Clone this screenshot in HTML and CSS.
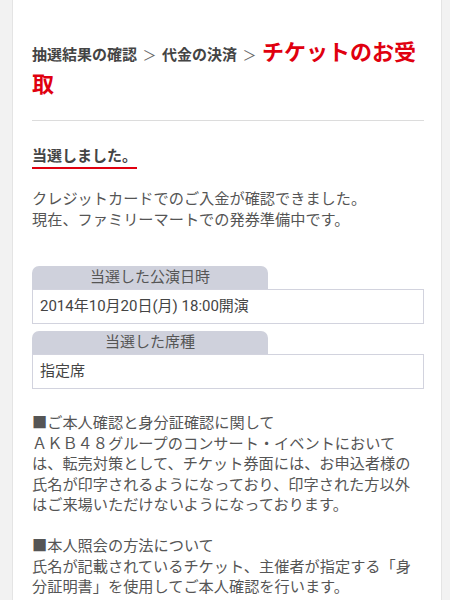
FILE: index.html
```html
<!DOCTYPE html>
<html lang="ja">
<head>
<meta charset="utf-8">
<link rel="stylesheet" href="styles.css">
</head>
<body>
<div class="page">
  <div class="card">
    <h1 class="crumbs"><span class="step">抽選結果の確認</span><span class="sep">＞</span><span class="step">代金の決済</span><span class="sep">＞</span><span class="current">チケットのお受取</span></h1>
    <hr class="divider">
    <h2 class="result"><span class="result-text">当選しました。</span></h2>
    <p class="lead">クレジットカードでのご入金が確認できました。<br>現在、ファミリーマートでの発券準備中です。</p>

    <div class="field">
      <div class="tab">当選した公演日時</div>
      <div class="box">2014年10月20日(月) 18:00開演</div>
    </div>
    <div class="field">
      <div class="tab">当選した席種</div>
      <div class="box">指定席</div>
    </div>

    <p class="notes">■ご本人確認と身分証確認に関して<br>ＡＫＢ４８グループのコンサート・イベントにおいては、転売対策として、チケット券面には、お申込者様の氏名が印字されるようになっており、印字された方以外はご来場いただけないようになっております。</p>
    <p class="notes">■本人照会の方法について<br>氏名が記載されているチケット、主催者が指定する「身分証明書」を使用してご本人確認を行います。<br>身分証明書は、「写真付きの公的証明書」を原則とさせていただきます。</p>
  </div>
</div>
</body>
</html>
```

FILE: styles.css
```css
html, body {
  margin: 0;
  padding: 0;
  background: #f2f2f2;
}
body {
  font-family: Roboto, "Noto Sans CJK JP", sans-serif;
  color: #555;
  overflow: hidden;
  height: 600px;
}
.page {
  padding: 0 8px 0 12px;
}
.card {
  background: #fff;
  border-left: 1px solid #e4e4e4;
  border-right: 1px solid #e4e4e4;
  padding: 34px 17px 40px 19px;
  min-height: 600px;
  box-sizing: border-box;
}
.crumbs {
  margin: 0;
  font-family: "Noto Sans CJK JP", sans-serif;
  font-size: 22px;
  line-height: 32px;
  font-weight: bold;
  color: #e0000f;
}
.crumbs .step {
  font-size: 15px;
  line-height: 15px;
  color: #444;
}
.crumbs .sep {
  margin: 0 5.5px;
  font-size: 14px;
  line-height: 14px;
  font-weight: normal;
  color: #666;
}
.divider {
  border: 0;
  border-top: 1px solid #dcdcdc;
  margin: 22px 0 0;
  height: 0;
}
.result {
  margin: 25px 0 0;
  font-size: 15px;
  line-height: 20px;
  font-weight: bold;
  color: #444;
}
.result-text {
  display: inline-block;
  border-bottom: 2px solid #e0000f;
  padding-bottom: 1px;
}
.lead {
  margin: 20px 0 0;
  font-size: 15.2px;
  line-height: 20.5px;
}
.field {
  margin-top: 7px;
}
.lead + .field {
  margin-top: 36px;
}
.tab {
  width: 236px;
  height: 23px;
  line-height: 23px;
  background: #cfd1dc;
  border-radius: 7px 7px 0 0;
  text-align: center;
  font-size: 15px;
  color: #555;
}
.box {
  border: 1px solid #d2d3de;
  height: 33px;
  line-height: 33px;
  padding: 0 7px;
  font-size: 15px;
  color: #444;
}
.notes {
  margin: 0;
  font-size: 15.2px;
  line-height: 20.5px;
}
.field + .notes {
  margin-top: 24px;
}
.notes + .notes {
  margin-top: 20.5px;
}
```
